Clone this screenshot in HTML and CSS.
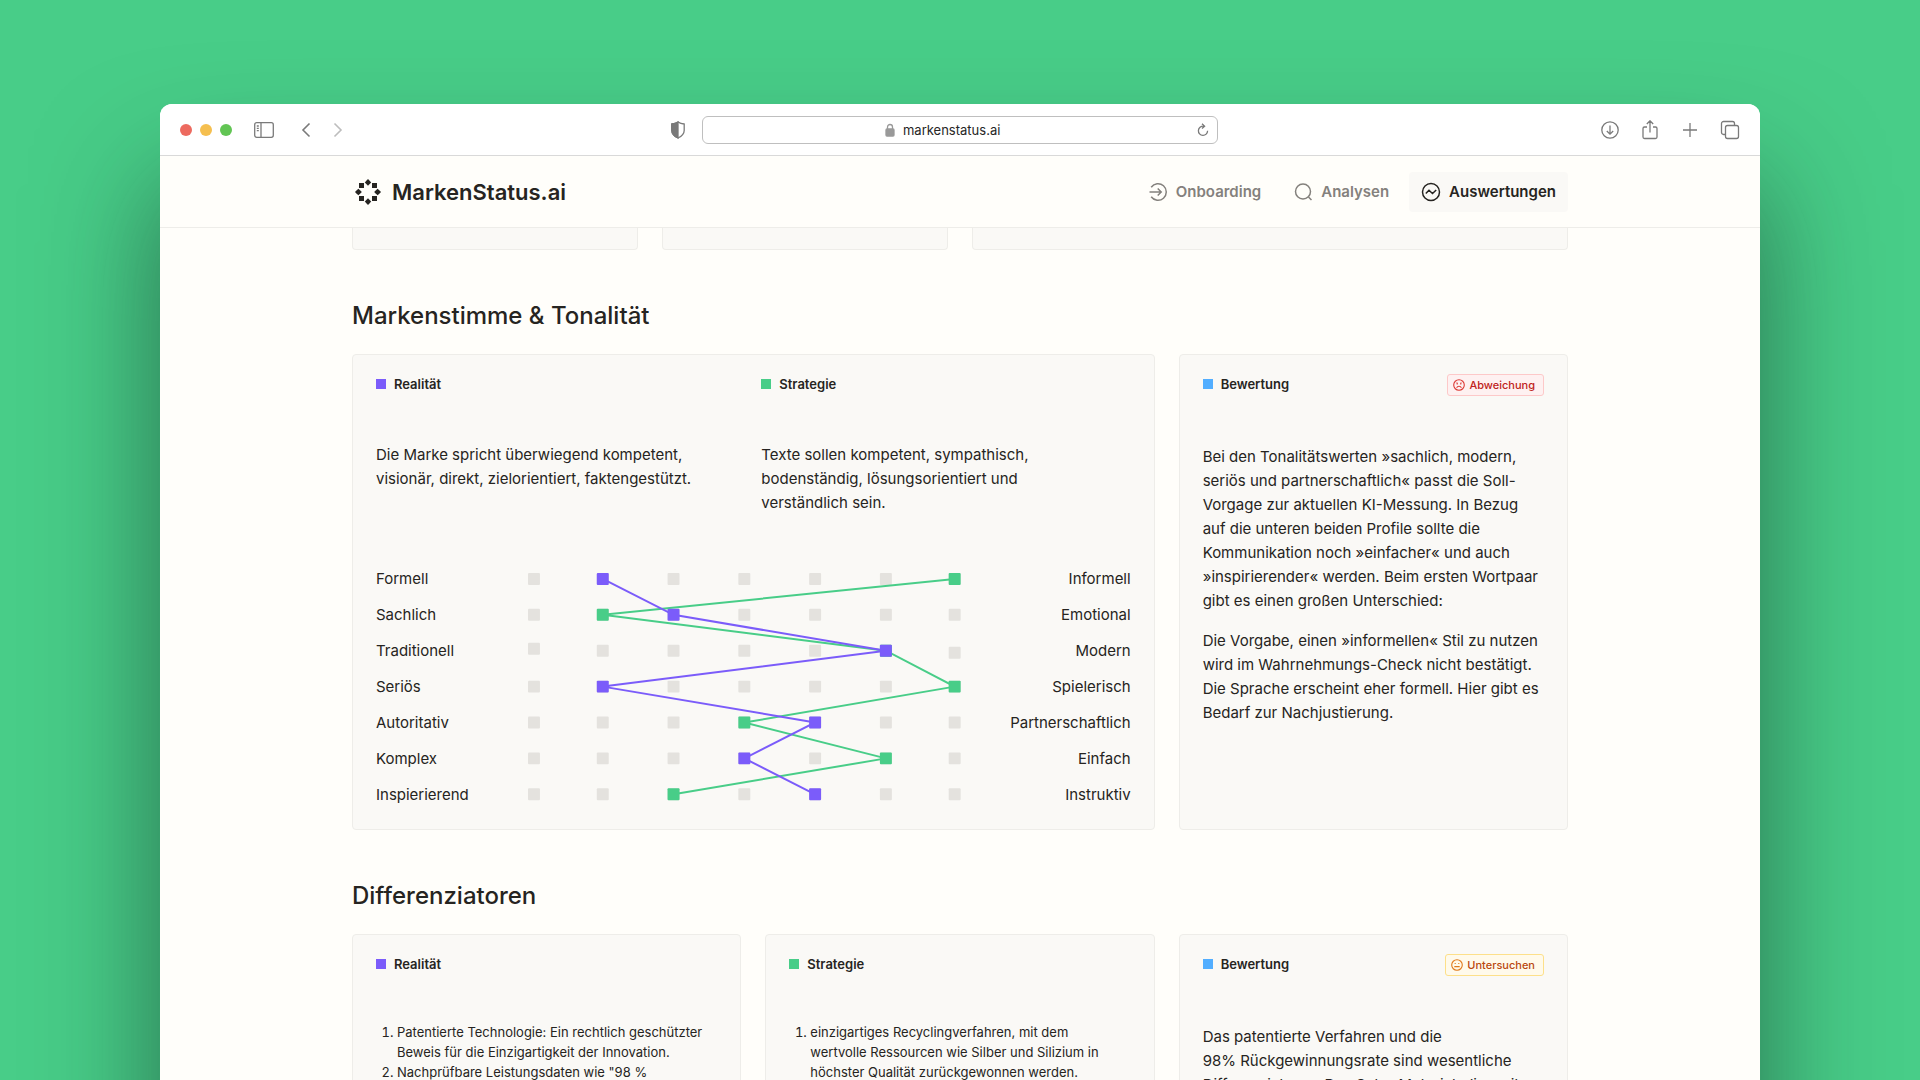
FILE: index.html
```html
<!DOCTYPE html>
<html lang="de">
<head>
    <meta charset="UTF-8">
    <meta name="viewport" content="width=device-width, initial-scale=1.0">
    <title>MarkenStatus.ai</title>
    <link rel="stylesheet" href="styles.css">
</head>
<body>
    <div class="window">

        <!-- Browser toolbar -->
        <div class="toolbar">
            <div class="toolbar-left">
                <div class="lights">
                    <span class="light red"></span>
                    <span class="light yellow"></span>
                    <span class="light green"></span>
                </div>
                <button class="tool sidebar" aria-label="Seitenleiste">
                    <svg width="20" height="16" viewBox="0 0 20 16"><rect x="0.7" y="0.7" width="18.6" height="14.6" rx="2"/><path d="M7 1v14M2.8 4h2M2.8 6.3h2M2.8 8.6h2"/></svg>
                </button>
                <button class="tool back" aria-label="Zurück">
                    <svg width="10" height="16" viewBox="0 0 10 16"><path d="M8.5 1.5L2 8l6.5 6.5" stroke-width="1.6"/></svg>
                </button>
                <button class="tool forward" aria-label="Vorwärts">
                    <svg width="10" height="16" viewBox="0 0 10 16"><path d="M1.5 1.5L8 8l-6.5 6.5" stroke-width="1.6"/></svg>
                </button>
                <button class="tool shield" aria-label="Datenschutz">
                    <svg width="16" height="18" viewBox="0 0 16 18"><path d="M8 1c2 1.3 4 1.8 6.2 2v6.5c0 3.3-2.5 5.7-6.2 7.5-3.7-1.8-6.2-4.2-6.2-7.5V3C4 2.8 6 2.3 8 1z"/><path class="solid" d="M8 1v16c-3.7-1.8-6.2-4.2-6.2-7.5V3C4 2.8 6 2.3 8 1z"/></svg>
                </button>
            </div>
            <div class="address">
                <label class="url">
                    <svg width="10" height="14" viewBox="0 0 10 14"><rect class="solid" x="1" y="6" width="8" height="7" rx="1"/><path d="M2.5 6V4a2.5 2.5 0 0 1 5 0v2"/></svg>
                    <input type="text" value="markenstatus.ai" aria-label="Adresse">
                </label>
                <button class="tool" aria-label="Neu laden">
                    <svg width="12" height="14" viewBox="0 0 12 14"><path d="M6.5 3.2A4.6 4.6 0 1 0 10.6 7.8M5 .8l2.6 2.4L5 5.6"/></svg>
                </button>
            </div>
            <div class="toolbar-right">
                <button class="tool" aria-label="Downloads">
                    <svg width="20" height="20" viewBox="0 0 20 20"><circle cx="10" cy="10" r="8.2"/><path d="M10 5.5v8.5M6.8 11l3.2 3.2 3.2-3.2"/></svg>
                </button>
                <button class="tool" aria-label="Teilen">
                    <svg width="20" height="20" viewBox="0 0 20 20"><path d="M7 7H4.5a1.5 1.5 0 0 0-1.5 1.5v8.5A1.5 1.5 0 0 0 4.5 18.500h11a1.5 1.5 0 0 0 1.5-1.5V8.500A1.5 1.5 0 0 0 15.5 7H13M10 12.500V1M6.8 4L10 .8 13.2 4"/></svg>
                </button>
                <button class="tool" aria-label="Neuer Tab">
                    <svg width="20" height="20" viewBox="0 0 20 20"><path d="M10 3v14M3 10h14"/></svg>
                </button>
                <button class="tool" aria-label="Tabs">
                    <svg width="20" height="20" viewBox="0 0 20 20"><rect x="5.5" y="5.5" width="13" height="13" rx="2"/><path d="M5.5 14.5H3.5a2 2 0 0 1-2-2V3.500a2 2 0 0 1 2-2h9a2 2 0 0 1 2 2v2"/></svg>
                </button>
            </div>
        </div>

        <!-- Site header -->
        <header class="header">
            <div class="container header-inner">
                <a class="logo" href="#">
                    <svg width="32" height="32" viewBox="-16 -16 32 32">
                        <path d="M0-13l1.200 1.200 2 2.200-2 2.200L0-6.200l-1.200-1.200-2-2.200 2-2.200z"/>
                        <path d="M0 13l1.200-1.200 2-2.200-2-2.200L0 6.200l-1.200 1.200-2 2.200 2 2.200z"/>
                        <path d="M-13 0l1.200-1.200 2.200-2 2.200 2L-6.200 0l-1.200 1.200-2.200 2-2.200-2z"/>
                        <path d="M13 0l-1.200-1.200-2.200-2-2.200 2L6.200 0l1.200 1.200 2.200 2 2.200-2z"/>
                        <path d="M-9-9h5v5h-5zM4-9h5v5h-5zM-9 4h5v5h-5zM4 4h5v5h-5z"/>
                    </svg>
                    MarkenStatus.ai
                </a>
                <nav class="nav">
                    <a href="#">
                        <svg width="20" height="20" viewBox="0 0 20 20"><path d="M3.2 5.2a8.3 8.3 0 1 1 0 9.600M1.5 10H13M9.7 6.500L13.200 10l-3.500 3.500"/></svg>
                        Onboarding
                    </a>
                    <a href="#">
                        <svg width="20" height="20" viewBox="0 0 20 20"><circle cx="10" cy="9.5" r="7.5"/><path d="M15.5 15l3 3"/></svg>
                        Analysen
                    </a>
                    <a href="#" class="active">
                        <svg width="20" height="20" viewBox="0 0 20 20"><circle cx="10" cy="10" r="8.5"/><path d="M4.800 11.500L8 8.200l3.500 3.300 3.700-3.500"/></svg>
                        Auswertungen
                    </a>
                </nav>
            </div>
        </header>

        <main class="container">

            <!-- Lower edge of the previous section -->
            <div class="strip">
                <div class="card-end"></div>
                <div class="card-end"></div>
                <div class="card-end wide"></div>
            </div>

            <section>
                <h2>Markenstimme &amp; Tonalität</h2>
                <div class="cards">
                    <div class="card wide">
                        <div class="columns">
                            <div>
                                <h3 class="reality">Realität</h3>
                                <p>Die Marke spricht überwiegend kompetent, visionär, direkt, zielorientiert, faktengestützt.</p>
                            </div>
                            <div>
                                <h3 class="strategy">Strategie</h3>
                                <p>Texte sollen kompetent, sympathisch, bodenständig, lösungsorientiert und verständlich sein.</p>
                            </div>
                        </div>
                        <div class="profile">
                            <ul>
                                <li>Formell</li>
                                <li>Sachlich</li>
                                <li>Traditionell</li>
                                <li>Seriös</li>
                                <li>Autoritativ</li>
                                <li>Komplex</li>
                                <li>Inspierierend</li>
                            </ul>
                            <svg class="chart" id="chart" viewBox="0 0 434 252"></svg>
                            <ul class="opposite">
                                <li>Informell</li>
                                <li>Emotional</li>
                                <li>Modern</li>
                                <li>Spielerisch</li>
                                <li>Partnerschaftlich</li>
                                <li>Einfach</li>
                                <li>Instruktiv</li>
                            </ul>
                        </div>
                    </div>
                    <div class="card">
                        <div class="card-head">
                            <h3 class="rating">Bewertung</h3>
                            <span class="badge deviation">
                                <svg width="12" height="12" viewBox="0 0 12 12"><circle cx="6" cy="6" r="5.3"/><path d="M3.6 8.8C4.2 7.6 5 7.2 6 7.2s1.800.4 2.400 1.600M3.500 3.800l1.200.7M8.500 3.800l-1.200.7M4.200 4.600v.8M7.800 4.600v.8"/></svg>
                                Abweichung
                            </span>
                        </div>
                        <p>Bei den Tonalitätswerten »sachlich, modern, seriös und partnerschaftlich« passt die Soll-Vorgage zur aktuellen KI-Messung. In Bezug auf&nbsp;die unteren beiden Profile sollte die Kommunikation noch »einfacher« und auch »inspirierender« werden. Beim ersten Wortpaar gibt es einen großen Unterschied:</p>
                        <p>Die Vorgabe, einen »informellen« Stil zu nutzen wird im Wahrnehmungs-Check nicht bestätigt. Die Sprache erscheint eher formell. Hier gibt es Bedarf zur Nachjustierung.</p>
                    </div>
                </div>
            </section>

            <section>
                <h2>Differenziatoren</h2>
                <div class="cards">
                    <div class="card">
                        <h3 class="reality">Realität</h3>
                        <ol>
                            <li>Patentierte Technologie: Ein rechtlich geschützter Beweis für die Einzigartigkeit der Innovation.</li>
                            <li>Nachprüfbare Leistungsdaten wie "98 %</li>
                        </ol>
                    </div>
                    <div class="card">
                        <h3 class="strategy">Strategie</h3>
                        <ol>
                            <li>einzigartiges Recyclingverfahren, mit dem wertvolle Ressourcen wie Silber und Silizium in höchster Qualität zurückgewonnen werden.</li>
                        </ol>
                    </div>
                    <div class="card">
                        <div class="card-head">
                            <h3 class="rating">Bewertung</h3>
                            <span class="badge inspect">
                                <svg width="12" height="12" viewBox="0 0 12 12"><circle cx="6" cy="6" r="5.3"/><path d="M3.300 7.600h5.400M4.200 4v1M7.800 4v1"/></svg>
                                Untersuchen
                            </span>
                        </div>
                        <p>Das patentierte Verfahren und die 98%&nbsp;Rückgewinnungsrate sind wesentliche Differenziatoren. Das Solar-Material, die weit</p>
                    </div>
                </div>
            </section>
        </main>
    </div>

    <script>
        /* Values per word pair, 0 = left, 6 = right */
        const reality = [1, 2, 5, 1, 4, 3, 4];
        const strategy = [6, 1, 5, 6, 3, 5, 2];
        const xs = [6, 75, 146, 217, 288, 359, 428];

        function pointY(row) {
            return 18 + row * 36;
        }

        function square(x, y, cls) {
            return `<rect class="${cls}" x="${x - 6}" y="${y - 6}" width="12" height="12" rx="1"/>`;
        }

        function line(values, cls) {
            const points = values.map((v, row) => `${xs[v]},${pointY(row)}`).join(' ');
            return `<polyline class="${cls}" points="${points}"/>`;
        }

        let out = '';
        for (let row = 0; row < 7; row++) {
            xs.forEach((x, col) => {
                let y = pointY(row);
                if (row === 2 && col === 0) y -= 2;
                if (row === 2 && col === 6) y += 2;
                out += square(x, y, 'dot');
            });
        }
        out += line(strategy, 'line-strategy');
        out += line(reality, 'line-reality');
        strategy.forEach((v, row) => out += square(xs[v], pointY(row), 'dot-strategy'));
        reality.forEach((v, row) => out += square(xs[v], pointY(row), 'dot-reality'));
        document.getElementById('chart').innerHTML = out;
    </script>
</body>
</html>
```
FILE: styles.css
```css
* {
    box-sizing: border-box;
}

body {
    margin: 0;
    height: 100vh;
    overflow: hidden;
    display: flex;
    justify-content: center;
    padding-top: 104px;
    background-color: #48cd88;
    font-family: Inter, "Liberation Sans", sans-serif;
    font-size: 15px;
    line-height: 24px;
    color: #262421;
}

h2, h3, p, ul, ol {
    margin: 0;
    padding: 0;
    font-weight: 400;
}

a {
    color: inherit;
    text-decoration: none;
}

svg {
    flex: none;
    display: block;
}

/* Browser window */
.window {
    width: 83.333%;
    height: 100vh;
    overflow: hidden;
    border-radius: 12px 12px 0 0;
    background-color: #fffefa;
    box-shadow: 0 80px 120px rgba(20, 50, 40, 0.6);
}

.toolbar {
    display: grid;
    grid-template-columns: 1fr minmax(0, 516px) 1fr;
    gap: 16px;
    align-items: center;
    height: 52px;
    padding: 0 20px;
    background-color: #fff;
    border-bottom: 1px solid #d9d9d9;
}

.toolbar-left,
.toolbar-right,
.lights {
    display: flex;
    align-items: center;
}

.toolbar-right {
    justify-content: flex-end;
    gap: 20px;
}

.lights {
    gap: 8px;
}

.light {
    width: 12px;
    height: 12px;
    border-radius: 50%;
}

.red { background-color: #ed6a5f; }
.yellow { background-color: #f5bf4f; }
.green { background-color: #62c554; }

.tool {
    padding: 0;
    border: none;
    background: none;
    color: #7a7a7a;
    cursor: pointer;
}

.tool svg,
.url svg {
    fill: none;
    stroke: currentColor;
    stroke-width: 1.3;
}

.tool .solid,
.url .solid {
    fill: currentColor;
}

.sidebar { margin-left: 22px; }
.back { margin-left: 27px; }
.forward { margin-left: 22px; color: #bdbdbd; }
.shield { margin-left: auto; }

.address {
    display: flex;
    align-items: center;
    height: 28px;
    padding: 0 8px;
    border: 1px solid #bfbfbf;
    border-radius: 6px;
}

.url {
    flex: 1;
    display: flex;
    align-items: center;
    justify-content: center;
    gap: 8px;
    padding-right: 12px;
    color: #999;
}

.url input {
    width: 108px;
    padding: 0;
    border: none;
    background: none;
    font: 13px Inter, sans-serif;
    color: #262626;
}

/* Site header */
.header {
    height: 72px;
    border-bottom: 1px solid #eeede9;
}

.container {
    max-width: 1216px;
    margin: 0 auto;
}

.header-inner {
    display: flex;
    align-items: center;
    justify-content: space-between;
    height: 100%;
}

.logo {
    display: flex;
    align-items: center;
    gap: 8px;
    font-size: 22px;
    font-weight: 600;
    fill: currentColor;
}

.nav {
    display: flex;
    gap: 8px;
}

.nav a {
    display: flex;
    align-items: center;
    gap: 8px;
    padding: 8px 12px;
    border-radius: 4px;
    font-weight: 600;
    color: #84817d;
}

.nav svg {
    fill: none;
    stroke: currentColor;
    stroke-width: 1.5;
}

.nav .active {
    background-color: #faf9f6;
    color: #262421;
}

/* Cards */
.strip {
    display: grid;
    grid-template-columns: repeat(4, 1fr);
    gap: 24px;
    margin-bottom: 50px;
}

.wide {
    grid-column: span 2;
}

.card-end {
    height: 22px;
    border: 1px solid #eeede9;
    border-top: none;
    border-radius: 0 0 4px 4px;
    background-color: #faf9f6;
}

section {
    margin-bottom: 50px;
}

h2 {
    margin-bottom: 22px;
    font-size: 24px;
    line-height: 32px;
    font-weight: 500;
}

.cards {
    display: grid;
    grid-template-columns: repeat(3, 1fr);
    gap: 24px;
}

.card {
    padding: 19px 23px 16px;
    border: 1px solid #eeede9;
    border-radius: 4px;
    background-color: #faf9f6;
}

h3 {
    display: flex;
    align-items: center;
    gap: 8px;
    font-size: 13px;
    line-height: 20px;
    font-weight: 600;
}

h3::before {
    content: "";
    width: 10px;
    height: 10px;
}

.reality::before { background-color: #7b5cfa; }
.strategy::before { background-color: #48cd88; }
.rating::before { background-color: #52aeff; }

h3 + p,
h3 + ol,
.card-head + p {
    margin-top: 49px;
}

h3 + ol {
    margin-top: 48px;
}

p + p {
    margin-top: 16px;
}

.card-head {
    display: flex;
    align-items: flex-start;
    justify-content: space-between;
}

.badge {
    display: flex;
    align-items: center;
    gap: 4px;
    padding: 0 8px 0 5px;
    border: 1px solid;
    border-radius: 3px;
    font-size: 11px;
    line-height: 20px;
    font-weight: 500;
}

.badge svg {
    fill: none;
    stroke-width: 1.1;
}

.deviation {
    border-color: #fdc9c9;
    background-color: #fef1f1;
    color: #bf2320;
    stroke: #dc3a35;
}

.inspect {
    border-color: #fde08a;
    background-color: #fffaeb;
    color: #b9480f;
    stroke: #e07a1c;
}

.card ol {
    padding: 0 8px 0 21px;
    font-size: 13px;
    line-height: 20px;
}

/* Tonality profile */
.columns {
    display: grid;
    grid-template-columns: 1fr 1fr;
    gap: 16px;
}

.columns p {
    max-width: 330px;
}

.profile {
    display: grid;
    grid-template-columns: 152px 1fr 170px;
    margin-top: 46px;
}

.profile ul {
    list-style: none;
    line-height: 36px;
}

.opposite {
    text-align: right;
}

.chart {
    width: 100%;
}

.chart polyline {
    fill: none;
    stroke-width: 2;
}

.dot { fill: #e4e2de; }
.dot-reality { fill: #7b5cfa; }
.dot-strategy { fill: #48cd88; }
.line-reality { stroke: #7b5cfa; }
.line-strategy { stroke: #48cd88; }
```
